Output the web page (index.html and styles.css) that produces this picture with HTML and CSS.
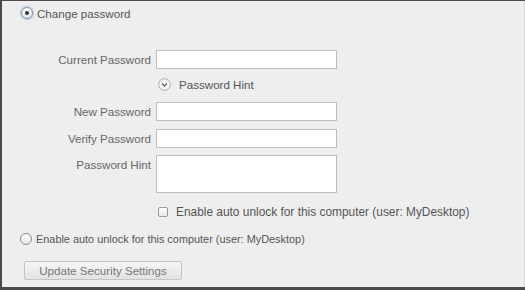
FILE: index.html
```html
<!DOCTYPE html>
<html>
<head>
<meta charset="utf-8">
<link rel="stylesheet" href="styles.css">
</head>
<body>
<div class="frame">
  <label class="radio-row top">
    <span class="radio checked"><span class="dot"></span></span>
    <span class="radio-text">Change password</span>
  </label>
  <div class="form">
    <div class="row">
      <span class="label">Current Password</span>
      <span class="input"></span>
    </div>
    <div class="row hint-row">
      <span class="label"></span>
      <span class="hint-toggle">
        <svg width="13" height="13" viewBox="0 0 13 13"><circle cx="6.5" cy="6.5" r="5.8" fill="#f7f7f7" stroke="#aaa" stroke-width="1"/><path d="M4 5.5 L6.5 8 L9 5.5" fill="none" stroke="#666" stroke-width="1.3"/></svg>
        <span>Password Hint</span>
      </span>
    </div>
    <div class="row new-row">
      <span class="label">New Password</span>
      <span class="input"></span>
    </div>
    <div class="row verify-row">
      <span class="label">Verify Password</span>
      <span class="input"></span>
    </div>
    <div class="row area-row">
      <span class="label">Password Hint</span>
      <span class="input area"></span>
    </div>
    <div class="row check-row">
      <span class="label"></span>
      <span class="check-wrap"><span class="checkbox"></span><span class="check-text">Enable auto unlock for this computer (user: MyDesktop)</span></span>
    </div>
  </div>
  <label class="radio-row bottom">
    <span class="radio"></span>
    <span class="radio-text small">Enable auto unlock for this computer (user: MyDesktop)</span>
  </label>
  <div class="btn-row">
    <span class="button">Update Security Settings</span>
  </div>
</div>
</body>
</html>
```
FILE: styles.css
```css
html, body {
  margin: 0;
  padding: 0;
  background: #4a4a4a;
}
body {
  width: 525px;
  height: 290px;
  overflow: hidden;
  font-family: "Liberation Sans", Arial, sans-serif;
  font-size: 11.6px;
  color: #555;
}
.frame {
  box-sizing: border-box;
  width: 523px;
  height: 286px;
  margin: 1px 0 0 2px;
  background: #eeeeee;
  border-right: 1px solid #d8d8d8;
  padding-top: 5px;
}
.radio-row {
  display: flex;
  align-items: center;
  height: 14px;
}
.radio-row.top {
  padding-left: 19px;
}
.radio {
  box-sizing: border-box;
  width: 12px;
  height: 12px;
  border-radius: 50%;
  border: 1px solid #8a8a8a;
  background: linear-gradient(#fdfdfd, #e6e6e6);
  display: flex;
  align-items: center;
  justify-content: center;
  margin-right: 4px;
}
.radio.checked {
  border-color: #7d8fa8;
  box-shadow: 0 0 2px 1px #b9cbe3;
}
.dot {
  width: 4px;
  height: 4px;
  border-radius: 50%;
  background: #333;
}
.radio-text {
  color: #555;
}
.form {
  margin-top: 30px;
}
.row {
  display: flex;
  align-items: flex-start;
}
.label {
  width: 152px;
  text-align: right;
  padding-right: 3px;
  box-sizing: border-box;
  color: #666;
  line-height: 19px;
}
.input {
  box-sizing: border-box;
  width: 181px;
  height: 19px;
  background: #fff;
  border: 1px solid #bdbdbd;
  margin-left: 2px;
}
.input.area {
  height: 38px;
}
.hint-row {
  margin-top: 9px;
  height: 16px;
}
.hint-toggle {
  display: flex;
  align-items: center;
  gap: 8px;
  margin-left: 3px;
  padding-left: 1px;
  color: #555;
}
.new-row { margin-top: 8px; }
.verify-row { margin-top: 8px; }
.area-row { margin-top: 7px; }
.check-row {
  margin-top: 12px;
}
.check-wrap {
  display: flex;
  align-items: center;
  margin-left: 4px;
}
.checkbox {
  box-sizing: border-box;
  width: 10px;
  height: 10px;
  border: 1px solid #999;
  border-radius: 2px;
  background: linear-gradient(#fff, #e8e8e8);
  margin-right: 8px;
}
.check-text { color: #555; font-size: 11.9px; }
.radio-row.bottom {
  padding-left: 18px;
  margin-top: 13px;
}
.radio-text.small {
  font-size: 10.9px;
}
.btn-row {
  margin-top: 15px;
  padding-left: 22px;
}
.button {
  display: inline-block;
  box-sizing: border-box;
  width: 158px;
  height: 19px;
  line-height: 17px;
  border: 1px solid #c4c4c4;
  border-radius: 2px;
  background: linear-gradient(#f6f6f6, #e2e2e2);
  color: #777;
  text-align: center;
}
```
